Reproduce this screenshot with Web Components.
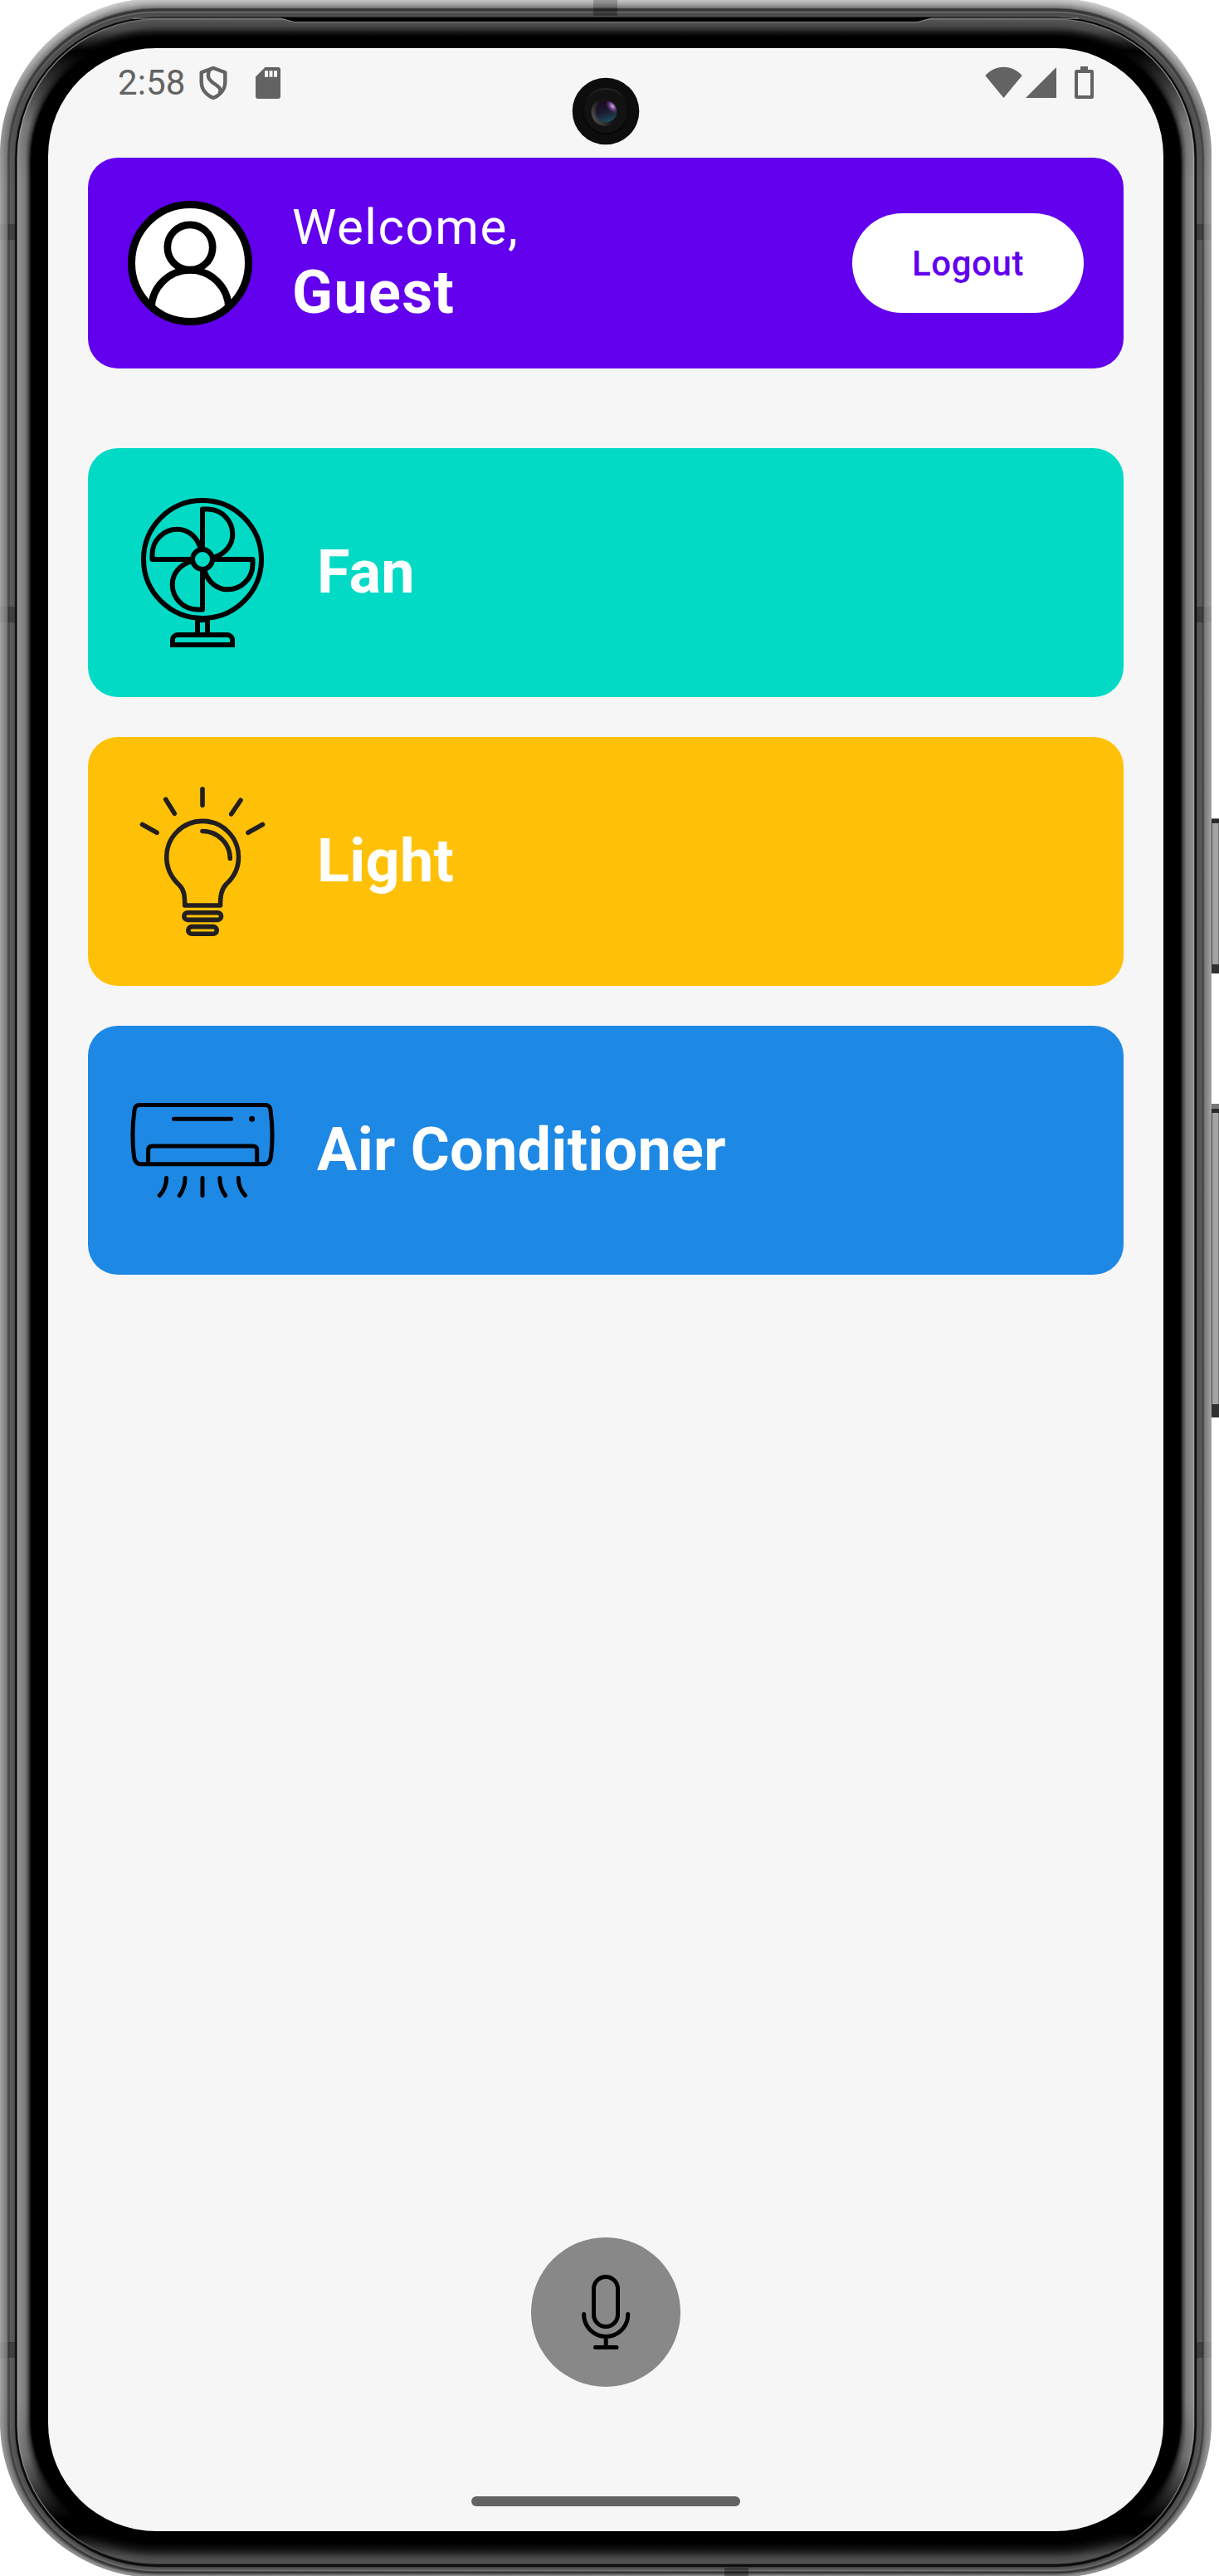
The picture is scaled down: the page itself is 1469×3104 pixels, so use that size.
<!DOCTYPE html>
<html lang="en">
<head>
<meta charset="utf-8">
<title>Smart Home</title>
<style>
html,body{margin:0;padding:0;background:#fff}
body{width:1469px;height:3104px;overflow:hidden;font-family:Roboto,"Liberation Sans",sans-serif}
</style>
</head>
<body>
<phone-frame>
  <status-bar></status-bar>
  <camera-lens></camera-lens>
  <home-screen>
    <user-header name="Guest"></user-header>
    <device-card icon="fan" style="--card:#03dac5">Fan</device-card>
    <device-card icon="light" style="--card:#ffc107">Light</device-card>
    <device-card icon="ac" style="--card:#1e88e5">Air Conditioner</device-card>
    <mic-button slot="footer"></mic-button>
  </home-screen>
  <nav-handle></nav-handle>
</phone-frame>
<script>
function define(name, html, setup) {
  const t = document.createElement('template');
  t.innerHTML = html;
  customElements.define(name, class extends HTMLElement {
    constructor() {
      super();
      this.attachShadow({mode: 'open'}).append(t.content.cloneNode(true));
    }
    connectedCallback() { if (setup) setup(this, this.shadowRoot); }
  });
}

/* Bezel profile: [side inset, top inset, bottom inset, side grey, top grey, bottom grey] */
const PROFILE = [
  [0, -2, -2, 162, 205, 150],
  [4, 3, 1, 142, 178, 130],
  [8, 9, 3, 122, 125, 75],
  [9.5, 10.5, 4, 72, 55, 50],
  [11, 13, 5, 72, 55, 60],
  [12, 14, 6, 92, 115, 115],
  [14, 16, 8, 88, 72, 84],
  [17.3, 19.6, 10.2, 84, 84, 80],
  [18.2, 20.8, 11, 12, 8, 12],
  [20, 22, 13.6, 6, 4, 14],
  [20.8, 22.6, 14.2, 180, 120, 60],
  [22, 24, 15.5, 142, 84, 84],
  [30, 31, 21, 124, 72, 72],
  [34, 38, 30, 75, 30, 32],
  [37, 43, 38, 4, 3, 3],
  [39, 45, 40, 0, 0, 0]
];
function bezel() {
  let defs = '', rects = '', n = 0;
  for (let s = 0; s <= 39; s += 0.5) {
    let k = 0;
    while (k < PROFILE.length - 2 && PROFILE[k + 1][0] <= s) k++;
    const a = PROFILE[k], b = PROFILE[k + 1], f = (s - a[0]) / (b[0] - a[0]);
    const v = a.map((x, i) => x + (b[i] - x) * f);
    const g = x => { const c = Math.round(x); return `rgb(${c},${c},${c})`; };
    const stops = s > 21.5
      ? [[0, v[4]], [36, v[4]], [62, 0], [75, v[3] * .15], [150, v[3] * .9], [220, v[3]],
         [2890, v[3]], [2960, v[3] * .85], [3035, 0], [3052, 0], [3080, v[5]], [3104, v[5]]]
      : [[0, v[4]], [20, v[4]], [140, v[3] * .92], [230, v[3]], [2880, v[3]], [3040, (v[3] + v[5]) / 2.2], [3090, v[5]], [3104, v[5]]];
    defs += `<linearGradient id="g${n}" gradientUnits="userSpaceOnUse" x1="0" x2="0" y1="0" y2="3104">` +
      stops.map(p => `<stop offset="${p[0] / 3104}" stop-color="${g(p[1])}"/>`).join('') + '</linearGradient>';
    rects += `<rect x="${s}" y="${v[1]}" width="${1460 - 2 * s}" height="${3104 - v[1] - v[2]}" rx="${188 - s}" ry="${188 - s}" fill="url(#g${n})"/>`;
    n++;
  }
  const seam = (x, y, w, h, o) => `<rect x="${x}" y="${y}" width="${w}" height="${h}" fill="#000" fill-opacity="${o}"/>`;
  let seams = seam(715, 0, 29, 9, .22) + seam(715, 9, 29, 10, .3) + seam(873, 3094, 29, 10, .35);
  for (const y of [270, 731, 2822])
    seams += seam(10, y, 8, 19, .28) + seam(0, y, 10, 19, .05) + seam(1442, y, 8, 19, .28) + seam(1450, y, 10, 19, .05);
  const slot = '<path d="M338 21.5H1122L1105 26.5H355Z" fill="#000"/>' +
    '<path d="M160 22.2H338L355 26.8H1105L1122 22.2H1300" fill="none" stroke="#8a8a8a"/>';
  const key = (y, h, t, b) => `<g><rect x="1460" y="${y}" width="9" height="${h}" fill="#a3a3a3"/>
    <rect x="1460" y="${y}" width="1" height="${h}" fill="#444"/><rect x="1468" y="${y}" width="1" height="${h}" fill="#777"/>
    <rect x="1460" y="${y + t}" width="9" height="5" fill="#2a2a2a"/><rect x="1460" y="${y}" width="9" height="${t}" fill="#777"/>
    <rect x="1460" y="${y + h - b}" width="9" height="${b}" fill="#303030"/></g>`;
  return `<defs>${defs}</defs>${rects}${slot}${seams}${key(986, 187, 1, 11)}${key(1330, 378, 6, 16)}`;
}

define('phone-frame', `<style>
:host{display:grid;width:1469px;height:3104px;overflow:hidden}
svg,.screen{grid-area:1/1}
.screen{position:relative;margin:58px 67px 54px 58px;border-radius:130px;background:#f6f6f6;overflow:hidden;display:flex;flex-direction:column}
</style><svg width="1469" height="3104" viewBox="0 0 1469 3104"></svg><div class="screen"><slot></slot></div>`,
(el, root) => { root.querySelector('svg').innerHTML = bezel(); });

define('status-bar', `<style>
:host{display:flex;height:132px;box-sizing:border-box;padding:22px 84px 0 84px;align-items:flex-start;color:#636363;flex:none}
.time{font-size:42px;line-height:40px;letter-spacing:.1px;width:98px;white-space:nowrap}
svg{display:block;flex:none}
.sd{margin-left:34px}
.wifi{margin-left:auto}
.sig{margin:0 22px 0 4px}
</style>
<span class="time">2:58</span>
<svg width="34" height="40" fill="none" stroke="#636363" stroke-width="4.400" stroke-linejoin="round"><path d="M17 2L31.3 7.3V19C31.3 27.5 25.5 34.5 17 38C8.5 34.500 2.700 27.500 2.700 19V7.300Z"/><path d="M12.500 4C9.300 12 11 15.500 17 20C25.500 25.500 27 28 24.500 33"/></svg>
<svg class="sd" width="30" height="40"><path fill="#636363" fill-rule="evenodd" d="M11.500 1H27a3 3 0 0 1 3 3V36a3 3 0 0 1-3 3H3a3 3 0 0 1-3-3V12.500ZM11 5.300V12.700H15V5.300ZM16.500 5.300V12.700H20.500V5.300ZM22 5.300V12.700H26V5.300Z"/></svg>
<svg class="wifi" width="45" height="40"><path fill="#636363" d="M22.500 38L.300 11C6 4.500 14 .700 22.500 .700S39 4.500 44.700 11Z"/></svg>
<svg class="sig" width="37" height="40"><path fill="#636363" d="M37 1V38H0Z"/></svg>
<svg width="23" height="40"><path fill="#636363" fill-rule="evenodd" d="M7 0H16V4H20.500a2.500 2.500 0 0 1 2.500 2.500V36.500a2.500 2.500 0 0 1-2.500 2.500H2.500a2.500 2.500 0 0 1-2.500-2.500V6.500a2.500 2.500 0 0 1 2.500-2.500H7ZM4 8V35H19V8Z"/></svg>`);

define('camera-lens', `<style>:host{position:absolute;left:631px;top:35px;width:82px;height:82px}svg{display:block}</style>
<svg width="82" height="82" viewBox="0 0 82 82"><defs>
<linearGradient id="a" x1="0" y1="0" x2="0" y2="1"><stop offset="0" stop-color="#242424"/><stop offset=".3" stop-color="#0c0c0c"/><stop offset="1" stop-color="#050505"/></linearGradient>
<linearGradient id="b" x1="0" y1=".8" x2="1" y2=".2"><stop offset="0" stop-color="#555"/><stop offset=".5" stop-color="#161616"/><stop offset="1" stop-color="#111"/></linearGradient>
<linearGradient id="c" x1=".2" y1="0" x2=".5" y2="1"><stop offset="0" stop-color="#1a0820"/><stop offset=".5" stop-color="#1a1a2e"/><stop offset="1" stop-color="#1d4a5c"/></linearGradient>
<radialGradient id="d"><stop offset="0" stop-color="#d5b5f0"/><stop offset=".45" stop-color="#7b4a98" stop-opacity=".8"/><stop offset="1" stop-color="#401850" stop-opacity="0"/></radialGradient>
<clipPath id="e"><circle cx="41.500" cy="41.500" r="13"/></clipPath></defs>
<circle cx="41" cy="41" r="40.300" fill="#0d0d0d"/><circle cx="41" cy="41" r="27" fill="#121212" stroke="url(#a)" stroke-width="2"/>
<circle cx="40" cy="42" r="16.500" fill="url(#b)"/>
<g clip-path="url(#e)"><circle cx="41.500" cy="41.500" r="13" fill="url(#c)"/><ellipse cx="49" cy="35" rx="7" ry="11" transform="rotate(-38 49 35)" fill="url(#d)"/></g></svg>`);

define('home-screen', `<style>
:host{display:flex;flex-direction:column;flex:1;padding:0 48px 132px}
.list{display:flex;flex-direction:column;gap:48px}
.foot{margin-top:auto;display:flex;justify-content:center}
</style><div class="list"><slot></slot></div><div class="foot"><slot name="footer"></slot></div>`);

define('user-header', `<style>
:host{display:flex;align-items:center;height:254px;box-sizing:border-box;padding:0 48px;border-radius:36px;background:#6200ee;color:#fff;margin-bottom:48px}
svg{display:block;flex:none;margin-right:48px}
.text{display:flex;flex-direction:column;flex:1}
.hi{font-size:60px;line-height:72px;letter-spacing:1.6px}
.name{font-size:72px;line-height:86px;font-weight:700;letter-spacing:1.3px}
button{all:unset;box-sizing:border-box;width:279px;height:120px;border-radius:60px;background:#fff;color:#6200ee;font-size:42px;font-weight:500;letter-spacing:.6px;text-align:center}
</style>
<svg width="150" height="150"><defs><clipPath id="r"><circle cx="75" cy="75" r="72"/></clipPath></defs>
<circle cx="75" cy="75" r="70.500" fill="#fff" stroke="#000" stroke-width="9"/>
<g fill="none" stroke="#000" stroke-width="8.700"><circle cx="75" cy="56" r="27.200"/><path clip-path="url(#r)" d="M28.500 132V130A46.500 46.500 0 0 1 121.500 130V132"/></g></svg>
<div class="text"><span class="hi">Welcome,</span><span class="name"></span></div>
<button>Logout</button>`, (el, root) => { root.querySelector('.name').textContent = el.getAttribute('name'); });

const BLADE = '<path d="M90 60V13.500H96A30.200 30.200 0 0 1 126.300 43.700C126.300 56 118 67 104 71.500"/>';
const ICONS = {
  fan: `<g stroke="#000" stroke-width="6"><circle cx="90" cy="74" r="71"/><circle cx="90" cy="74" r="12"/>` +
    [0, 90, 180, 270].map(a => `<g transform="rotate(${a} 90 74)">${BLADE}</g>`).join('') +
    `<path d="M84 146V165M96 146V165M84 147H96" /><path stroke-linejoin="miter" d="M54 177V171A6 6 0 0 1 60 165H120A6 6 0 0 1 126 171V177Z"/></g>`,
  light: `<g stroke="#231f20" stroke-width="5.600"><path d="M90 2.800V22.200M45.700 15.300L56.300 32.300M136 16.300L124.700 33M17.500 45.500L35 55.300M162.500 45.500L145 55.300"/>
    <path d="M68.700 143C68.700 132 68 124 62 118.500C52 109 46.700 98 46.700 84.800A43.400 43.400 0 0 1 133.500 84.800C133.500 98 128 109 118.500 117.500C112.500 124 111.500 132 111.500 143Z"/>
    <path d="M90 53.500A33.300 33.300 0 0 1 123.300 86.500"/><rect x="67.800" y="151.800" width="44.800" height="8.600" rx="4.300"/><rect x="72.800" y="168.600" width="34.500" height="8.600" rx="4.300"/></g>`,
  ac: `<g stroke="#000" stroke-width="5"><path d="M14 35.600H166C170 35.600 171.500 38 172 42C174.500 60 174.500 82 172.500 98C171.500 104 169 106.800 164 106.800H16C11 106.800 8.500 104 7.500 98C5.500 82 5.500 60 8 42C8.500 38 10 35.600 14 35.600Z"/>
    <path d="M55.500 52.300H124.500M24.600 106V90Q24.600 85 29.600 85H150.700Q155.700 85 155.700 90V106"/><circle cx="149.600" cy="52.300" r="3.500" fill="#000" stroke="none"/>
    <path d="M46.500 123.500C46.500 132 43.500 139 38.300 144.500M69 123.500C69 132 67 138 62.300 144.500M90 123.500V144.500M110.800 123.500C110.800 132 113 138 117.500 144.500M133.300 123.500C133.300 132 136.500 139 141.500 144.500"/></g>`
};
define('device-card', `<style>
:host{display:flex;align-items:center;height:300px;box-sizing:border-box;padding:0 48px;gap:48px;border-radius:36px;background:var(--card);color:#fff;font-size:72px;font-weight:700;line-height:84px;letter-spacing:.25px}
svg{display:block;flex:none}
</style><svg width="180" height="180" viewBox="0 0 180 180" fill="none" stroke-linecap="round" stroke-linejoin="round"></svg><span><slot></slot></span>`,
(el, root) => { root.querySelector('svg').innerHTML = ICONS[el.getAttribute('icon')]; });

define('mic-button', `<style>
:host{display:flex;align-items:center;justify-content:center;width:180px;height:180px;border-radius:50%;background:#888}
svg{display:block}
</style><svg width="90" height="90" viewBox="0 0 90 90" fill="none" stroke="#000" stroke-width="5" stroke-linecap="round"><rect x="30.500" y="2.500" width="29" height="60" rx="14.500"/><path d="M18.700 47.500V48A26.500 26.500 0 0 0 71.700 48V47.500M45.200 75V87M32.500 87.400H58"/></svg>`);

define('nav-handle', `<style>
:host{display:block;flex:none;align-self:center;width:324px;height:12px;border-radius:6px;background:#636363;margin-bottom:30px}
</style>`);
</script>
</body>
</html>
